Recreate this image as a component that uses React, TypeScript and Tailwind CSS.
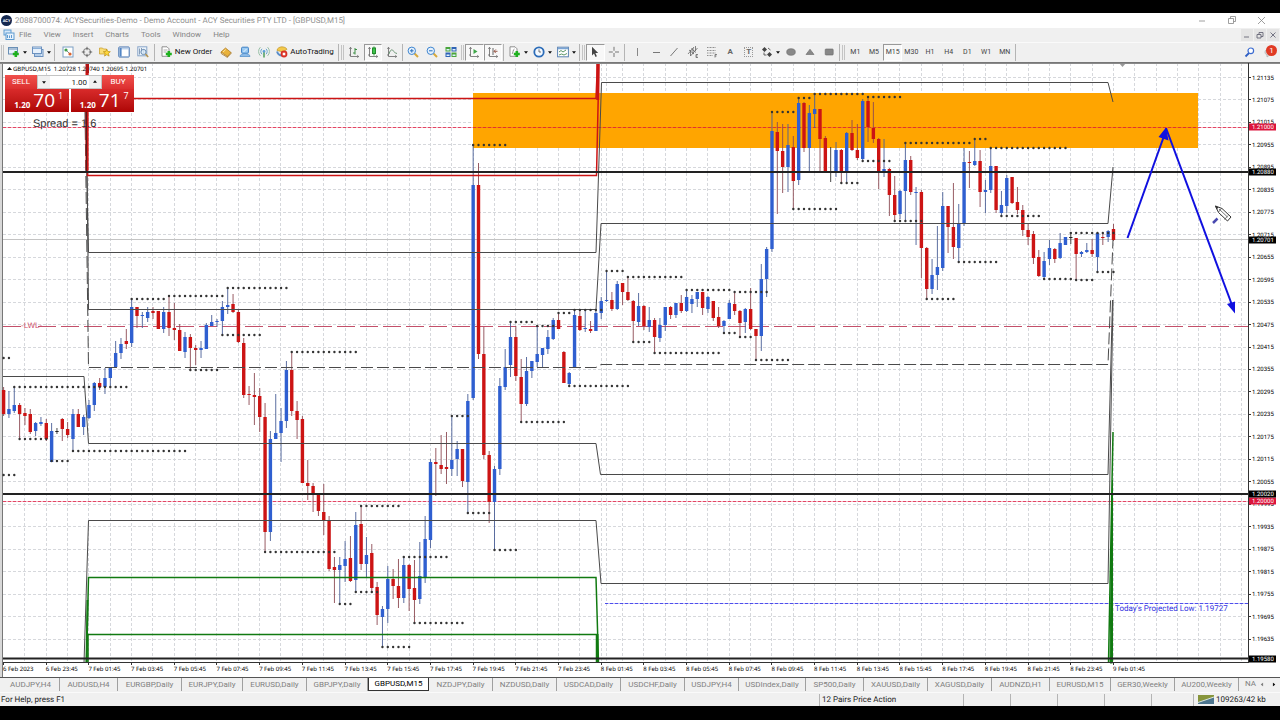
import React, { useState } from 'react';

type Candle = [number, number, number, number, number];

const U = 1;
const D = 0;
const K = 2;

// [kind, high, body top, body bottom, low]
const candles: Candle[] = [
  [D, 387, 390, 414, 416], [U, 391, 409, 414, 418], [U, 387, 405, 411, 413], [D, 403, 405, 414, 439],
  [D, 408, 413, 416, 425], [D, 409, 414, 432, 434], [U, 422, 423, 431, 436], [U, 417, 422, 424, 426],
  [D, 419, 423, 439, 441], [U, 423, 431, 462, 462], [K, 428, 431, 432, 434], [D, 418, 419, 429, 441],
  [D, 422, 429, 435, 438], [U, 409, 414, 439, 451], [D, 409, 414, 427, 427], [U, 415, 417, 427, 435],
  [U, 400, 405, 418, 419], [U, 382, 383, 405, 411], [D, 378, 383, 387, 390], [U, 368, 378, 387, 394],
  [U, 368, 368, 378, 388], [U, 341, 353, 367, 368], [U, 338, 344, 353, 359], [D, 329, 341, 344, 349],
  [U, 299, 307, 343, 347], [D, 307, 307, 316, 328], [U, 312, 315, 316, 328], [U, 307, 312, 318, 322],
  [D, 307, 311, 313, 319], [D, 311, 311, 329, 329], [U, 307, 312, 329, 333], [D, 296, 312, 328, 336],
  [D, 303, 328, 330, 340], [D, 324, 330, 351, 351], [U, 332, 337, 352, 358], [D, 334, 337, 348, 370],
  [D, 345, 348, 350, 365], [U, 341, 348, 350, 358], [U, 323, 325, 349, 349], [U, 315, 322, 326, 326],
  [U, 319, 321, 322, 327], [U, 301, 307, 321, 335], [U, 288, 305, 307, 314], [D, 294, 304, 312, 313],
  [D, 309, 312, 342, 343], [D, 338, 343, 395, 398], [D, 386, 394, 395, 405], [D, 373, 395, 397, 425],
  [D, 388, 396, 417, 432], [D, 403, 417, 532, 552], [U, 431, 439, 532, 541], [U, 394, 433, 439, 439],
  [U, 408, 421, 433, 462], [U, 361, 370, 421, 428], [D, 352, 370, 411, 416], [D, 401, 411, 420, 439],
  [D, 416, 419, 483, 483], [D, 460, 483, 486, 500], [D, 483, 486, 495, 512], [D, 494, 495, 511, 516],
  [D, 484, 512, 520, 535], [D, 516, 520, 569, 571], [D, 557, 567, 570, 603], [U, 557, 565, 570, 604],
  [U, 541, 559, 566, 582], [D, 536, 558, 581, 582], [U, 512, 525, 580, 592], [D, 506, 524, 564, 570],
  [U, 537, 555, 564, 578], [D, 544, 553, 588, 592], [D, 582, 587, 615, 625], [U, 606, 609, 617, 647],
  [U, 566, 579, 609, 623], [D, 569, 579, 586, 599], [D, 559, 586, 598, 608], [U, 557, 565, 598, 603],
  [D, 564, 565, 589, 611], [D, 560, 588, 600, 623], [U, 542, 576, 599, 604], [U, 516, 539, 577, 583],
  [U, 459, 462, 540, 548], [D, 448, 462, 464, 496], [D, 435, 465, 469, 474], [D, 432, 467, 469, 484],
  [U, 416, 460, 469, 476], [U, 441, 449, 459, 476], [D, 449, 449, 481, 487], [U, 394, 401, 482, 513],
  [U, 145, 185, 398, 400], [D, 163, 185, 354, 359], [D, 327, 354, 455, 459], [D, 451, 455, 502, 523],
  [U, 466, 469, 502, 550], [U, 378, 386, 469, 475], [U, 349, 367, 387, 390], [U, 322, 337, 365, 377],
  [D, 326, 337, 376, 381], [D, 359, 377, 404, 422], [U, 357, 371, 404, 406], [U, 361, 361, 371, 378],
  [U, 326, 354, 362, 367], [U, 348, 348, 355, 368], [U, 330, 337, 349, 354], [U, 318, 320, 339, 340],
  [D, 313, 320, 329, 329], [D, 351, 352, 383, 383], [U, 372, 373, 384, 386], [U, 310, 315, 367, 367],
  [D, 310, 316, 330, 331], [U, 311, 328, 329, 332], [D, 321, 329, 331, 333], [U, 311, 313, 331, 331],
  [U, 297, 301, 313, 319], [U, 271, 300, 301, 302], [D, 292, 300, 309, 311], [U, 281, 284, 309, 310],
  [D, 283, 283, 292, 305], [D, 277, 292, 300, 301], [D, 300, 301, 321, 342], [U, 293, 306, 322, 326],
  [D, 305, 306, 326, 330], [U, 307, 320, 327, 332], [D, 318, 320, 337, 353], [U, 318, 325, 338, 342],
  [U, 307, 307, 325, 331], [D, 306, 307, 315, 319], [U, 303, 303, 315, 318], [D, 295, 303, 311, 313],
  [U, 290, 297, 311, 312], [U, 295, 299, 304, 313], [U, 292, 292, 299, 307], [D, 292, 292, 308, 315],
  [U, 296, 297, 309, 313], [D, 301, 301, 318, 321], [D, 307, 317, 326, 328], [U, 320, 321, 326, 333],
  [U, 300, 303, 319, 319], [D, 292, 304, 311, 315], [D, 310, 311, 323, 337], [U, 308, 309, 322, 333],
  [D, 288, 309, 329, 330], [D, 329, 329, 336, 359], [U, 264, 279, 336, 351], [U, 247, 249, 279, 297],
  [U, 112, 131, 249, 252], [D, 122, 132, 151, 214], [D, 124, 151, 167, 193], [U, 124, 145, 167, 192],
  [D, 136, 147, 181, 209], [U, 98, 103, 180, 185], [D, 102, 103, 148, 152], [U, 105, 113, 148, 172],
  [U, 94, 109, 114, 128], [D, 109, 109, 139, 173], [D, 136, 138, 172, 172], [K, 147, 171, 172, 182],
  [U, 142, 150, 172, 177], [D, 149, 150, 172, 183], [U, 132, 133, 172, 182], [D, 120, 133, 150, 151],
  [D, 124, 150, 158, 160], [U, 99, 101, 159, 160], [D, 97, 101, 127, 142], [D, 102, 128, 139, 143],
  [D, 138, 139, 172, 189], [U, 139, 169, 172, 177], [D, 168, 169, 195, 216], [D, 176, 195, 215, 221],
  [U, 190, 191, 214, 219], [U, 143, 160, 191, 220], [D, 156, 160, 192, 195], [U, 187, 192, 193, 245],
  [D, 190, 192, 248, 278], [D, 247, 248, 289, 299], [U, 259, 275, 289, 294], [U, 226, 267, 275, 290],
  [U, 192, 206, 268, 271], [D, 206, 206, 227, 253], [D, 183, 227, 247, 259], [U, 204, 223, 248, 262],
  [U, 148, 162, 223, 226], [D, 151, 162, 163, 188], [U, 139, 161, 165, 166], [D, 150, 161, 192, 207],
  [U, 180, 190, 192, 213], [U, 148, 166, 190, 193], [D, 166, 166, 210, 213], [U, 191, 205, 213, 216],
  [U, 175, 178, 206, 213], [D, 177, 177, 203, 204], [D, 187, 202, 210, 214], [D, 205, 210, 230, 236],
  [D, 224, 230, 237, 245], [D, 231, 234, 258, 264], [D, 250, 257, 276, 277], [U, 252, 261, 277, 279],
  [U, 240, 248, 259, 265], [D, 248, 249, 259, 263], [U, 233, 243, 258, 259], [U, 237, 237, 245, 245],
  [K, 232, 237, 238, 244], [D, 238, 238, 254, 280], [U, 251, 252, 254, 257], [U, 243, 250, 252, 253],
  [D, 239, 250, 254, 257], [U, 232, 233, 257, 272], [D, 233, 237, 238, 245], [U, 230, 231, 237, 242],
  [D, 224, 229, 240, 241],
];

// [first bar, last bar, y]
const fractals = [
  [0, 1, 358], [0, 2, 475], [2, 23, 387], [3, 8, 439], [9, 12, 461], [13, 34, 451], [24, 30, 299],
  [31, 41, 296], [42, 53, 288], [41, 48, 335], [35, 40, 370], [54, 66, 352], [49, 62, 552], [63, 65, 604],
  [66, 70, 592], [67, 74, 506], [71, 76, 647], [75, 83, 557], [77, 86, 623], [84, 87, 416], [87, 91, 513],
  [92, 96, 550], [88, 94, 145], [97, 105, 422], [95, 99, 322], [100, 103, 326], [104, 106, 313],
  [107, 112, 310], [106, 117, 386], [113, 116, 271], [117, 127, 277], [118, 121, 342], [122, 134, 353],
  [128, 136, 290], [137, 143, 292], [135, 137, 333], [138, 140, 337], [141, 147, 360], [144, 148, 112],
  [149, 151, 98], [152, 161, 94], [162, 168, 97], [148, 156, 209], [157, 160, 183], [161, 166, 161],
  [167, 172, 221], [169, 181, 143], [182, 184, 139], [173, 178, 299], [179, 186, 262], [185, 199, 148],
  [187, 194, 216], [200, 208, 233], [195, 200, 279], [201, 204, 280], [205, 208, 272],
];

const barX = (i: number) => 3.6 + i * 5.336;

const timeLabels = [
  '6 Feb 2023', '6 Feb 23:45', '7 Feb 01:45', '7 Feb 03:45', '7 Feb 05:45', '7 Feb 07:45', '7 Feb 09:45',
  '7 Feb 11:45', '7 Feb 13:45', '7 Feb 15:45', '7 Feb 17:45', '7 Feb 19:45', '7 Feb 21:45', '7 Feb 23:45',
  '8 Feb 01:45', '8 Feb 03:45', '8 Feb 05:45', '8 Feb 07:45', '8 Feb 09:45', '8 Feb 11:45', '8 Feb 13:45',
  '8 Feb 15:45', '8 Feb 17:45', '8 Feb 19:45', '8 Feb 21:45', '8 Feb 23:45', '9 Feb 01:45',
];

const priceLabels = Array.from({ length: 26 }, (_, i) => ({
  y: 77 + i * 22.46,
  text: (1.21135 - i * 0.0006).toFixed(5),
}));

const priceTags = [
  { y: 127, text: '1.21000', color: '#dc143c' },
  { y: 172, text: '1.20880', color: '#000' },
  { y: 240, text: '1.20701', color: '#000' },
  { y: 501, text: '1.20000', color: '#dc143c' },
  { y: 494, text: '1.20020', color: '#000' },
  { y: 659, text: '1.19580', color: '#000' },
];

const menus = ['File', 'View', 'Insert', 'Charts', 'Tools', 'Window', 'Help'];
const timeframes = ['M1', 'M5', 'M15', 'M30', 'H1', 'H4', 'D1', 'W1', 'MN'];

const tabs = [
  { name: 'AUDJPY,H4', width: 'w-[58px]' },
  { name: 'AUDUSD,H4', width: 'w-[58px]' },
  { name: 'EURGBP,Daily', width: 'w-[64px]' },
  { name: 'EURJPY,Daily', width: 'w-[61px]' },
  { name: 'EURUSD,Daily', width: 'w-[64px]' },
  { name: 'GBPJPY,Daily', width: 'w-[61px]' },
  { name: 'GBPUSD,M15', width: 'w-[61px]' },
  { name: 'NZDJPY,Daily', width: 'w-[64px]' },
  { name: 'NZDUSD,Daily', width: 'w-[64px]' },
  { name: 'USDCAD,Daily', width: 'w-[64px]' },
  { name: 'USDCHF,Daily', width: 'w-[64px]' },
  { name: 'USDJPY,H4', width: 'w-[54px]' },
  { name: 'USDIndex,Daily', width: 'w-[67px]' },
  { name: 'SP500,Daily', width: 'w-[58px]' },
  { name: 'XAUUSD,Daily', width: 'w-[64px]' },
  { name: 'XAGUSD,Daily', width: 'w-[64px]' },
  { name: 'AUDNZD,H1', width: 'w-[58px]' },
  { name: 'EURUSD,M15', width: 'w-[61px]' },
  { name: 'GER30,Weekly', width: 'w-[64px]' },
  { name: 'AU200,Weekly', width: 'w-[64px]' },
];

function Icon({ children }: { children: React.ReactNode }) {
  return (
    <svg viewBox="0 0 12 12" className="size-3 shrink-0" fill="none" strokeWidth="1">
      {children}
    </svg>
  );
}

const Plus = () => <path d="M7.8 5v6M4.8 8h6" stroke="#1fb01f" strokeWidth="2.6" />;

const Axes = () => (
  <path d="M2.5 1.5v9h8M1 9h2M1.3 2.8l1.2-1.5 1.2 1.5M9.3 9.3l1.4 1.2-1.4 1.2" stroke="#666" strokeWidth=".8" />
);

const newChartIcon = (
  <Icon>
    <rect x=".5" y="1.5" width="9" height="6.5" fill="#e8f1fb" stroke="#6a8fb5" />
    <path d="M1 3h8" stroke="#6a8fb5" />
    <Plus />
  </Icon>
);

const profilesIcon = (
  <Icon>
    <rect x="2.5" y="3.5" width="8.5" height="7" fill="#d5e5f6" stroke="#6c92c0" />
    <rect x=".5" y="1" width="9" height="6.5" fill="#e6f0fb" stroke="#6c92c0" />
    <path d="M1 2.5h8M3 9h6" stroke="#8cb0d8" />
  </Icon>
);

const viewIcons = [
  {
    name: 'Market Watch',
    icon: (
      <Icon>
        <rect x="1" y="1" width="10" height="10" fill="#fff" stroke="#7d9fc4" />
        <circle cx="4" cy="4" r="1.6" fill="#3f9e46" />
        <path d="M5 5l3 3" stroke="#888" />
        <circle cx="8" cy="8" r="1.6" fill="#d9622b" />
      </Icon>
    ),
  },
  {
    name: 'Data Window',
    icon: (
      <Icon>
        <circle cx="6" cy="6" r="3.6" stroke="#777" />
        <path d="M6 .8v3.4M6 7.8v3.4M.8 6h3.4M7.8 6h3.4" stroke="#666" />
      </Icon>
    ),
  },
  {
    name: 'Navigator',
    icon: (
      <Icon>
        <path d="M.5 2h3l1 1h3v5h-7z" fill="#f9dd76" stroke="#c69a26" strokeWidth=".7" />
        <path d="M7.8 3.2l1 2.3 2.5.2-1.9 1.7.7 2.7-2.3-1.4-2.3 1.4.7-2.7-1.9-1.7 2.4-.2z" fill="#ffd83a" stroke="#b98c13" strokeWidth=".7" />
      </Icon>
    ),
  },
  {
    name: 'Terminal',
    icon: (
      <Icon>
        <rect x=".8" y="1" width="10.4" height="10" rx=".6" fill="#fff" stroke="#3f6fae" />
        <path d="M1.5 2.8h9" stroke="#9dbce2" />
        <path d="M2.6 2v8.5" stroke="#5285c4" strokeWidth="2" />
      </Icon>
    ),
  },
  {
    name: 'Strategy Tester',
    icon: (
      <Icon>
        <rect x=".8" y=".8" width="9" height="9" fill="#eef5fc" stroke="#88a5c8" />
        <path d="M2.5 2.5v6M4.5 2v4M6.5 3v5" stroke="#6b86a6" strokeWidth=".8" />
        <circle cx="6.5" cy="6" r="2.6" fill="#dcecf8" fillOpacity=".8" stroke="#6a8cb2" />
        <path d="M8.5 8l2.7 3" stroke="#b79248" strokeWidth="1.4" />
      </Icon>
    ),
  },
];

const serviceIcons = [
  {
    name: 'MetaEditor',
    icon: (
      <Icon>
        <path d="M1 6l4.5-4L11 6.5 7.5 10.5z" fill="#e9b23b" stroke="#a8731a" strokeWidth=".7" />
        <path d="M1 6l.4 1.7 6 3.6.1-.8M11 6.5v1L7.4 11.3" stroke="#a8731a" strokeWidth=".8" />
        <path d="M3 6l2.7-2.4" stroke="#ffe39a" />
      </Icon>
    ),
  },
  {
    name: 'Community',
    icon: (
      <Icon>
        <rect x="2.6" y="1.2" width="6.8" height="6" rx="1" fill="#9ccbf3" stroke="#3a7ec4" />
        <path d="M4.5 6l3-3" stroke="#e4f3ff" />
        <path d="M1 10.5c0-2 2.4-3 5-3s5 1 5 3z" fill="#8ebce8" stroke="#4b89c8" strokeWidth=".7" />
      </Icon>
    ),
  },
  {
    name: 'Signals',
    icon: (
      <Icon>
        <circle cx="6" cy="5.5" r="1.4" fill="#5c9fd8" />
        <path d="M4 2.8a3.6 3.6 0 0 0 0 5.4M8 2.8a3.6 3.6 0 0 1 0 5.4" stroke="#6aa7cf" />
        <path d="M2.4 1.2a6 6 0 0 0 0 8.6M9.6 1.2a6 6 0 0 1 0 8.6" stroke="#97bfa6" />
        <path d="M6 6.5v5" stroke="#4c9c58" strokeWidth="1.5" />
      </Icon>
    ),
  },
];

const chartTypeIcons = [
  {
    name: 'Bar Chart',
    icon: (
      <Icon>
        <Axes />
        <path d="M7 2v6.500M5 7h2M7 3.500h2" stroke="#3c8f45" />
      </Icon>
    ),
  },
  {
    name: 'Candlesticks',
    icon: (
      <Icon>
        <Axes />
        <path d="M7 .5v9" stroke="#238a2c" />
        <rect x="5.500" y="2" width="3" height="5.500" fill="#3bc34a" stroke="#238a2c" />
      </Icon>
    ),
  },
  {
    name: 'Line Chart',
    icon: (
      <Icon>
        <Axes />
        <path d="M3 8c1-4 3-5 4-3.500s2 2.500 4 3" stroke="#5c8a66" strokeWidth=".9" />
      </Icon>
    ),
  },
];

const zoomIcons = [
  {
    name: 'Zoom In',
    icon: (
      <Icon>
        <path d="M7.500 7.500l3.500 3.500" stroke="#d7a93c" strokeWidth="2" />
        <circle cx="4.800" cy="4.800" r="3.700" fill="#e5f1fd" stroke="#3f86d0" />
        <path d="M4.800 3v3.600M3 4.800h3.600" stroke="#2a6fbd" />
      </Icon>
    ),
  },
  {
    name: 'Zoom Out',
    icon: (
      <Icon>
        <path d="M7.500 7.500l3.500 3.500" stroke="#d7a93c" strokeWidth="2" />
        <circle cx="4.800" cy="4.800" r="3.700" fill="#e5f1fd" stroke="#3f86d0" />
        <path d="M3 4.800h3.600" stroke="#2a6fbd" />
      </Icon>
    ),
  },
  {
    name: 'Tile Windows',
    icon: (
      <Icon>
        <path d="M.5 1h5v4.500h-5zM6.500 6.500h5v4.500h-5z" fill="#4aa53c" />
        <path d="M6.500 1h5v4.500h-5zM.5 6.500h5v4.500h-5z" fill="#2f64b5" />
        <path d="M1.500 3.800h3M7.500 3.800h3M1.500 9.300h3M7.500 9.300h3" stroke="#dff0ff" strokeWidth="1.600" />
      </Icon>
    ),
  },
];

const scrollIcons = [
  {
    name: 'Auto Scroll',
    icon: (
      <Icon>
        <Axes />
        <path d="M5.500 3l4 2.500-4 2.500z" fill="#3ea648" />
      </Icon>
    ),
  },
  {
    name: 'Chart Shift',
    icon: (
      <Icon>
        <Axes />
        <path d="M6 2v7" stroke="#666" />
        <path d="M10.500 5.300H7M8.800 3.500L7 5.300l1.800 1.800" stroke="#9a5a4a" />
      </Icon>
    ),
  },
];

const indicatorsIcon = (
  <Icon>
    <path d="M1 .8h5l2 2v7.500H1z" fill="#fff" stroke="#777" strokeWidth=".8" />
    <path d="M3 8c1 0 .8-5 2.500-5" stroke="#777" strokeWidth=".8" />
    <Plus />
  </Icon>
);

const periodsIcon = (
  <Icon>
    <circle cx="6" cy="6" r="4.700" fill="#f3f9ff" stroke="#2c6cb8" strokeWidth="1.800" />
    <path d="M6 3.300V6h2" stroke="#555" strokeWidth=".8" />
  </Icon>
);

const templatesIcon = (
  <Icon>
    <rect x=".6" y="1.200" width="10.800" height="9.600" fill="#fff" stroke="#5a83b3" />
    <path d="M1 2.500h10" stroke="#7ba5d6" strokeWidth="1.500" />
    <path d="M2 6l2-1.500L6 6l3-2M2 9l2.500-1L7 9l3-1.500" stroke="#4a8a56" strokeWidth=".9" />
  </Icon>
);

const pointerIcons = [
  {
    name: 'Cursor',
    icon: (
      <Icon>
        <path d="M3 .8v8.700l2-1.900 1.500 3.300 1.400-.7-1.500-3.100h2.800z" fill="#444" />
      </Icon>
    ),
  },
  {
    name: 'Crosshair',
    icon: (
      <Icon>
        <path d="M6 .8v4M6 7v4M.8 6h4M7 6h4" stroke="#777" />
      </Icon>
    ),
  },
];

const lineIcons = [
  { name: 'Vertical Line', icon: <Icon><path d="M6.500 2v8" stroke="#888" /></Icon> },
  { name: 'Horizontal Line', icon: <Icon><path d="M3 6.500h7" stroke="#777" /></Icon> },
  { name: 'Trendline', icon: <Icon><path d="M2.500 10l7-8" stroke="#777" /></Icon> },
  {
    name: 'Equidistant Channel',
    icon: (
      <Icon>
        <path d="M1 8l6-7M3.500 10l7-8M2 4l5 4M4 2.500l5 4M3.500 4v6M6 2v6M8.500 0v5" stroke="#666" strokeWidth=".8" />
        <path d="M11 8.500H9v3h2M9 10h1.500" stroke="#555" strokeWidth=".7" />
      </Icon>
    ),
  },
  {
    name: 'Fibonacci Retracement',
    icon: (
      <Icon>
        <path d="M1 1.500h9M1 4.500h9M1 7h9M1 9.500h6" stroke="#777" strokeWidth=".8" strokeDasharray="1 .5" />
        <path d="M11 8.500H9v3M9 10h1.500" stroke="#555" strokeWidth=".7" />
      </Icon>
    ),
  },
  { name: 'Text', icon: <span className="text-[8px] font-bold text-[#666]">A</span> },
  {
    name: 'Text Label',
    icon: <span className="border border-dotted border-[#999] px-px text-[8px] leading-[8px] font-bold text-[#666]">T</span>,
  },
];

const arrowsIcon = (
  <Icon>
    <path d="M3.500 1L6 3.500 3.500 6 1 3.500zM8.500 6L11 8.500 8.500 11 6 8.500z" fill="#444" />
    <path d="M3 6.500v2.500h2.500M7 2l2.500 2" stroke="#555" strokeWidth=".9" />
  </Icon>
);

const shapeIcons = [
  { name: 'Ellipse', icon: <Icon><ellipse cx="6" cy="6" rx="4.300" ry="3.300" fill="#888" stroke="#666" strokeWidth=".6" /></Icon> },
  { name: 'Triangle', icon: <Icon><path d="M6 3.200l4 5.300H2z" fill="#888" stroke="#666" strokeWidth=".6" /></Icon> },
  { name: 'Rectangle', icon: <Icon><rect x="2.200" y="3" width="8" height="6" rx=".8" fill="#888" stroke="#666" strokeWidth=".6" /></Icon> },
];

function Caret() {
  return (
    <svg viewBox="0 0 4 3" className="h-[3px] w-1 shrink-0">
      <path d="M0 .3h4L2 2.800z" fill="#111" />
    </svg>
  );
}

function Separator() {
  return <span className="mx-px h-[17px] w-px shrink-0 bg-[#b4b4b4]" />;
}

function Grip() {
  return <span className="mx-px h-[15px] w-[3px] shrink-0 border-x border-[#c4c4c4]" />;
}

interface ToolGroupProps {
  items: Array<{ name: string; icon: React.ReactNode }>;
  width: string;
  pressed?: string[];
}

function ToolGroup({ items, width, pressed = [] }: ToolGroupProps) {
  return (
    <div className={`flex h-[17px] shrink-0 ${width}`}>
      {items.map((item) => (
        <button
          key={item.name}
          aria-label={item.name}
          className={`flex flex-1 items-center justify-center border ${
            pressed.includes(item.name)
              ? 'border-t-[#999] border-l-[#999] border-r-white border-b-white bg-[#f8f8f8]'
              : 'border-transparent'
          }`}
        >
          {item.icon}
        </button>
      ))}
    </div>
  );
}

function DropButton({ name, children }: { name: string; children: React.ReactNode }) {
  return (
    <button aria-label={name} className="flex w-6 shrink-0 items-center justify-center gap-[3px]">
      {children}
      <Caret />
    </button>
  );
}

function Toolbar() {
  const [timeframe, setTimeframe] = useState('M15');

  return (
    <div className="flex h-5 items-center overflow-hidden border-t border-[#fafafa] bg-[#f0f0f0] pb-px text-[8px] text-[#111]">
      <Grip />
      <DropButton name="New Chart">{newChartIcon}</DropButton>
      <DropButton name="Profiles">{profilesIcon}</DropButton>
      <Separator />
      <div className="w-[3px]" />
      <ToolGroup items={viewIcons} width="w-[93px]" />
      <div className="w-px" />
      <Separator />
      <button className="flex w-[61px] shrink-0 items-center justify-center gap-0.5 whitespace-nowrap">
        <Icon>
          <path d="M1 .8h5l2 2v7.500H1z" fill="#fff" stroke="#777" strokeWidth=".8" />
          <path d="M2.500 4h4M2.500 6h3" stroke="#999" strokeWidth=".8" />
          <Plus />
        </Icon>
        New Order
      </button>
      <ToolGroup items={serviceIcons} width="w-[56px]" />
      <button className="flex w-[64px] shrink-0 items-center justify-center gap-0.5 whitespace-nowrap">
        <Icon>
          <path d="M1 4.500C1 2 4 .8 6 .8s4.500 1 5 2.500L7 6z" fill="#f2c84b" stroke="#b98b1e" strokeWidth=".6" />
          <path d="M1 5.500c1 3 3 4 5 4" stroke="#5b8ec9" strokeWidth="2" />
          <circle cx="8" cy="8" r="3.400" fill="#d93025" />
          <rect x="6.700" y="6.700" width="2.600" height="2.600" fill="#fff" />
        </Icon>
        AutoTrading
      </button>
      <Separator />
      <Grip />
      <ToolGroup items={chartTypeIcons} width="w-[56px]" pressed={['Candlesticks']} />
      <Separator />
      <ToolGroup items={zoomIcons} width="w-[56px]" />
      <Grip />
      <ToolGroup items={scrollIcons} width="w-[37px]" pressed={['Auto Scroll', 'Chart Shift']} />
      <Separator />
      <div className="w-px" />
      <DropButton name="Indicators">{indicatorsIcon}</DropButton>
      <DropButton name="Periods">{periodsIcon}</DropButton>
      <DropButton name="Templates">{templatesIcon}</DropButton>
      <Separator />
      <Grip />
      <ToolGroup items={pointerIcons} width="w-[37px]" pressed={['Cursor']} />
      <Separator />
      <div className="w-0.5" />
      <ToolGroup items={lineIcons} width="w-[130px]" />
      <DropButton name="Arrows">{arrowsIcon}</DropButton>
      <ToolGroup items={shapeIcons} width="w-[56px]" />
      <Separator />
      <Grip />
      <div className="flex h-[17px] w-[168px] shrink-0 text-[7px] text-[#444]">
        {timeframes.map((name) => (
          <button
            key={name}
            onClick={() => setTimeframe(name)}
            className={`flex flex-1 items-center justify-center border ${
              timeframe === name
                ? 'border-t-[#999] border-l-[#999] border-r-white border-b-white bg-[#f8f8f8]'
                : 'border-transparent'
            }`}
          >
            {name}
          </button>
        ))}
      </div>
      <Separator />
      <div className="flex-1" />
      <button aria-label="Search" className="mr-2">
        <Icon>
          <path d="M5 7l-3.500 3.500" stroke="#2f5fc4" strokeWidth="1.800" />
          <circle cx="6.800" cy="4.800" r="2.800" fill="#fff" stroke="#3b6bd0" strokeWidth="1.200" />
        </Icon>
      </button>
      <button aria-label="Notifications" className="relative mr-1 size-3">
        <Icon>
          <path d="M1 6c0-2 2-3 4-3s4 1 4 3-2 3.500-4 3.500L3 11V9C1.500 8.500 1 7 1 6z" fill="#ddd" stroke="#aaa" strokeWidth=".7" />
        </Icon>
        <span className="absolute -top-px left-0.5 flex size-[11px] items-center justify-center rounded-full bg-[#e03a24] text-[8px] leading-none text-white">
          1
        </span>
      </button>
    </div>
  );
}

function OneClickPanel() {
  const [volume, setVolume] = useState('1.00');

  return (
    <div className="absolute top-3 left-[5px] w-[129px] text-white">
      <div className="flex h-[14px] text-[8px]">
        <button className="w-8 shrink-0 bg-linear-to-b from-[#f0504c] to-[#dc2f2f]">SELL</button>
        <div className="flex min-w-0 flex-1 items-center border border-[#c4c4c4] bg-white">
          <button aria-label="Decrease volume" className="flex h-full w-3 shrink-0 items-center justify-center bg-[#f0f0f0]">
            <Caret />
          </button>
          <input
            aria-label="Volume"
            value={volume}
            onChange={(e) => setVolume(e.target.value)}
            className="h-full w-full min-w-0 flex-1 pr-0.5 text-right text-[8px] text-[#222] outline-none"
          />
          <button aria-label="Increase volume" className="flex h-full w-3 shrink-0 rotate-180 items-center justify-center bg-[#f0f0f0]">
            <Caret />
          </button>
        </div>
        <button className="w-8 shrink-0 bg-linear-to-b from-[#f0504c] to-[#dc2f2f]">BUY</button>
      </div>
      <div className="flex gap-0.5">
        <Quote name="Sell by market" big="70" pip="1" />
        <Quote name="Buy by market" big="71" pip="7" />
      </div>
    </div>
  );
}

function Quote({ name, big, pip }: { name: string; big: string; pip: string }) {
  return (
    <button
      aria-label={name}
      className="flex h-[23px] flex-1 items-end justify-center gap-[3px] bg-linear-to-b from-[#d92a2a] to-[#ae0404] pb-0.5 pl-1 font-['Open_Sans']"
    >
      <span className="text-[8px] leading-[10px] font-bold">1.20</span>
      <span className="text-[19px] leading-[19px]">{big}</span>
      <span className="self-start pt-px text-[9px] leading-[11px]">{pip}</span>
    </button>
  );
}

function Chart() {
  return (
    <svg viewBox="0 63 1280 614" className="block h-auto w-full bg-white" fill="none">
      <path d="M0 63h3v614H0z" fill="#d8d8d8" />
      <path d="M2.500 63v614" stroke="#777" />

      {/* grid */}
      <g stroke="#d6d8dc" strokeDasharray="3 2">
        {priceLabels.map((p) => (
          <path key={p.text} d={`M3 ${Math.round(p.y)}.5H1248`} />
        ))}
        {Array.from({ length: 58 }, (_, i) => (
          <path key={i} d={`M${Math.round(3 + (i + 1) * 21.344)}.5 63V662`} />
        ))}
        <path d="M606.500 63V662" />
      </g>

      {/* supply zone */}
      <rect x="473" y="93" width="725" height="55" fill="#ffa500" />

      {/* horizontal levels */}
      <path d="M3 127.500H1248M3 501.500H1248" stroke="#dc143c" strokeOpacity=".3" />
      <path d="M3 127.500H1248M3 501.500H1248" stroke="#dc143c" strokeOpacity=".7" strokeDasharray="3 2" />
      <path d="M3 239.500H1248" stroke="#c4c4c4" />
      <path d="M3 326.500H21M38 326.500H1248" stroke="#c4506a" strokeDasharray="18 5" />
      <text x="21" y="328" className="font-['Liberation_Sans'] text-[8px]" fill="#d0506c">-LWL-</text>
      <path d="M605 603.500H1248" stroke="#2020e8" strokeOpacity=".3" />
      <path d="M605 603.500H1248" stroke="#2020e8" strokeOpacity=".7" strokeDasharray="3 2" />

      {/* candles */}
      {candles.map(([kind, high, top, bottom, low], i) => {
        const color = kind === U ? '#2f5fd0' : kind === D ? '#cc1414' : '#222';
        const wick = kind === U ? '#4a5f96' : kind === D ? '#8c4a52' : '#333';
        return (
          <g key={i}>
            <path d={`M${barX(i)} ${high}V${low}`} stroke={wick} strokeWidth=".9" />
            <rect x={barX(i) - 1.7} y={top} width="3.400" height={Math.max(bottom - top, 1)} fill={color} />
          </g>
        );
      })}

      {/* pivots */}
      <g stroke="#4a4a4a">
        <path d="M3 376.500H84L88.500 443.500H596L600.500 474.500H1108L1112.500 300" />
        <path d="M85.500 112L88.500 252.500H596L601.500 82.500H1108L1113 102" />
        <path d="M86.500 112L88.500 309.500H596L601 223.500H1108L1113 167" />
        <path d="M84 663L88.500 520.500H596L601 583.500H1108L1113 300" />
        <path d="M85 112L88.500 367.500H596L601 364.500H1108L1113 240" strokeDasharray="12 4" />
      </g>
      <g stroke="#cc1414">
        <path d="M87.500 63V175.500H596.500L599 63" strokeWidth="1.500" />
        <path d="M88 98.500H596L597.500 63" strokeWidth="1.500" />
        <path d="M87 63V170M597.800 63V100" strokeWidth="3" />
      </g>
      <path d="M86.500 112v60" stroke="#5c1a1a" />
      <g stroke="#117a11" strokeWidth="1.500">
        <path d="M86.500 663L88.500 577.500H596L598.500 663" />
        <path d="M88 663V634.500H596.500V663" />
        <path d="M1108.500 663L1113 432M1112 663V496" />
      </g>
      <path d="M86.500 663L87.500 600M597.500 634V663" stroke="#117a11" strokeWidth="2" />
      <path d="M1110 663L1111 580L1112.500 480V663z" fill="#117a11" stroke="#117a11" />

      <g stroke="#222" strokeWidth="2">
        <path d="M3 172H1248M3 494H1248M3 658.500H1248" />
      </g>

      {/* fractal dots */}
      <g fill="#333">
        {fractals.map(([from, to, y]) =>
          Array.from({ length: to - from + 1 }, (_, n) => (
            <circle key={`${from}-${y}-${n}`} cx={barX(from + n)} cy={y} r="1.200" />
          ))
        )}
      </g>

      {/* projection */}
      <g stroke="#1010e0" strokeWidth="2">
        <path d="M1127.500 238L1164 136" />
        <path d="M1166 128L1232 305" />
      </g>
      <path d="M1166 127.500l2.500 13-10-3.500zM1235 313.500l-8-9.500 8-2.500z" fill="#1010e0" />
      <path d="M1217.500 218.500l-4.500 4.500" stroke="#4a4ab0" strokeWidth="2.500" />
      <path d="M1215.500 206l3 6.500 9 8.500 3.500-4-9-8.500z" fill="#fff" stroke="#333" />
      <path d="M1219 209l8.500 8M1218.500 212l2.500-3M1224.500 219.500l3.500-4" stroke="#555" strokeWidth=".8" />
      <path d="M1215 205.500l3.500 2-2 2z" fill="#333" />

      <text x="1115" y="611" className="font-['Roboto'] text-[8px]" fill="#3030e0">
        Today's Projected Low: 1.19727
      </text>
      <text x="33" y="127" className="font-['Liberation_Sans'] text-[11px]" fill="#333">
        Spread = 1.6
      </text>
      <path d="M1119 63h7l-3.500 4z" fill="#999" />

      {/* frame and axes */}
      <path d="M0 63.500H1280" stroke="#8a8a8a" />
      <path d="M1248.500 63V663M3 662.500H1249" stroke="#333" />
      <g className="font-['Roboto'] text-[6px]" fill="#000">
        {priceLabels.map((p) => (
          <React.Fragment key={p.text}>
            <path d={`M1249 ${Math.round(p.y)}.5h2`} stroke="#333" />
            <text x="1252" y={Math.round(p.y + 2.5)}>{p.text}</text>
          </React.Fragment>
        ))}
        {priceTags.map((tag) => (
          <g key={tag.text}>
            <rect x="1249" y={tag.y - 3.5} width="27" height="7" fill={tag.color} />
            <text x="1252" y={tag.y + 2} fill="#fff">{tag.text}</text>
          </g>
        ))}
      </g>
      <g className="font-['Noto_Sans'] text-[6px]" fill="#000">
        {timeLabels.map((label, i) => (
          <React.Fragment key={label}>
            <path d={`M${Math.round(3 + i * 42.69)}.5 663v2`} stroke="#333" />
            <text x={3 + i * 42.69} y="671">{label}</text>
          </React.Fragment>
        ))}
        <path d="M7 70l2.500-3 2.500 3z" fill="#111" />
        <text x="13" y="71">GBPUSD,M15&nbsp;&nbsp;1.20728 1.20740 1.20695 1.20701</text>
      </g>
      <path d="M87.500 64V73" stroke="#b01414" strokeWidth="3" />
    </svg>
  );
}

export default function App() {
  const [activeTab, setActiveTab] = useState('GBPUSD,M15');

  return (
    <div className="flex min-h-screen flex-col bg-black pt-[13px] font-['Roboto','Noto_Sans',sans-serif] text-[8px] leading-[12px] [text-rendering:geometricPrecision]">
      <header className="flex h-[15px] items-center bg-white pl-px text-[#8f8f8f]">
        <span className="mr-[3px] flex size-[11px] items-center justify-center rounded-full bg-[#14284f] text-[4px] font-bold text-white">
          ACY
        </span>
        <h1 className="whitespace-nowrap">
          2088700074: ACYSecurities-Demo - Demo Account - ACY Securities PTY LTD - [GBPUSD,M15]
        </h1>
        <div className="ml-auto flex gap-[17px] pr-3">
          {['M1 6h6', 'M1.500 3.500h5v5h-5zM3.500 3.500v-2h5v5h-2', 'M2 2l7 7M9 2l-7 7'].map((d, i) => (
            <button key={d} aria-label={['Minimize', 'Restore', 'Close'][i]}>
              <Icon>
                <path d={d} stroke="#888" strokeWidth=".8" />
              </Icon>
            </button>
          ))}
        </div>
      </header>

      <nav className="flex h-[14px] items-center bg-[#f0f0f0] pl-[3px] text-[#858585]">
        <Icon>
          <rect x="1" y="1" width="7" height="5" fill="#d6e8fa" stroke="#5f9bd0" />
          <rect x="3" y="4" width="8" height="6.500" fill="#e9f3fd" stroke="#5f9bd0" />
          <path d="M4.500 6v3M6.500 6.500v2.500M8.500 6v3" stroke="#5f9bd0" />
        </Icon>
        <div className="flex gap-3 pl-1">
          {menus.map((menu) => (
            <button key={menu}>{menu}</button>
          ))}
        </div>
        <div className="ml-auto flex gap-px pr-px">
          {['M3 8h5', 'M3 5.500h4v3.500h-4zM5 5.500v-2h4v4h-2', 'M3.500 3.500l5 5M8.500 3.500l-5 5'].map((d, i) => (
            <button key={d} aria-label={['Minimize chart', 'Restore chart', 'Close chart'][i]} className="bg-[#e4e4e4]">
              <Icon>
                <path d={d} stroke="#667" strokeWidth=".9" />
              </Icon>
            </button>
          ))}
        </div>
      </nav>

      <Toolbar />

      <main className="relative border-t border-[#777]">
        <Chart />
        <OneClickPanel />
      </main>

      <div className="flex h-[15px] items-start overflow-hidden border-t border-[#555] bg-[#f0f0f0] pl-0.5 text-[#808080]">
        {tabs.map((tab) => (
          <button
            key={tab.name}
            onClick={() => setActiveTab(tab.name)}
            className={`h-[13px] shrink-0 whitespace-nowrap border-r ${tab.width} ${
              activeTab === tab.name
                ? 'border-b border-l border-[#333] bg-white text-black'
                : 'border-[#a0a0a0]'
            }`}
          >
            {tab.name}
          </button>
        ))}
        <button className="shrink-0 pl-1.5 whitespace-nowrap">NA</button>
        <div className="ml-auto flex h-[13px] items-center gap-2 pr-1">
          <button aria-label="Scroll tabs left" className="rotate-90 opacity-50"><Caret /></button>
          <button aria-label="Scroll tabs right" className="-rotate-90"><Caret /></button>
        </div>
      </div>

      <footer className="flex h-[14px] items-center border-t border-[#fafafa] bg-[#f0f0f0] text-[#222]">
        <span className="flex-1 pl-px">For Help, press F1</span>
        <span className="w-[144px] border-l border-[#b4b4b4] pl-0.5">12 Pairs Price Action</span>
        <span className="h-3 w-[47px] border-l border-[#b4b4b4]" />
        <span className="h-3 w-[47px] border-l border-[#b4b4b4]" />
        <span className="h-3 w-[47px] border-l border-[#b4b4b4]" />
        <span className="h-3 w-[47px] border-l border-[#b4b4b4]" />
        <span className="h-3 w-[42px] border-l border-[#b4b4b4]" />
        <span className="flex w-[87px] items-center gap-0.5 border-l border-[#b4b4b4] pl-1">
          <svg viewBox="0 0 16 9" className="h-[9px] w-4">
            <path d="M0 0h16v9H0z" fill="#4d7690" />
            <path d="M0 0h16v2L0 7z" fill="#87953c" />
            <path d="M0 7.500L16 2" stroke="#dfe8d8" />
          </svg>
          109263/42 kb
        </span>
      </footer>
    </div>
  );
}
